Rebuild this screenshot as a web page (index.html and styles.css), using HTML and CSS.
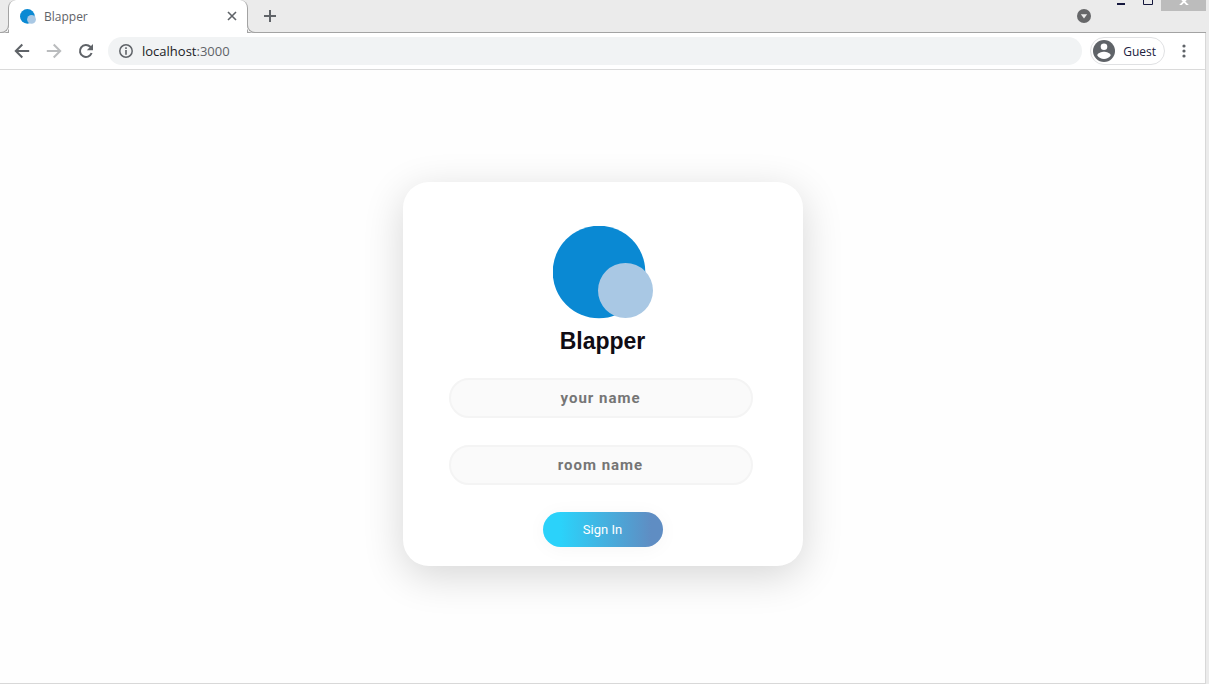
FILE: index.html
```html
<!DOCTYPE html>
<html lang="en">
<head>
<meta charset="utf-8">
<meta name="viewport" content="width=device-width, initial-scale=1">
<title>Blapper</title>
<link rel="stylesheet" href="styles.css">
</head>
<body>
<div class="window">
  <header class="tab-strip">
    <div class="tab">
      <svg class="favicon" viewBox="0 0 100 93" aria-hidden="true"><circle cx="46" cy="46" r="46" fill="#0a89d3"/><circle cx="72" cy="65" r="27.5" fill="#a9c8e4"/></svg>
      <span class="tab-title">Blapper</span>
      <button class="icon-button" type="button" aria-label="Close tab"><svg width="10" height="10" viewBox="0 0 10 10"><path d="M1 1l8 8M9 1l-8 8" stroke="#5f6368" stroke-width="1.6" fill="none"/></svg></button>
    </div>
    <button class="icon-button new-tab" type="button" aria-label="New tab"><svg width="12" height="12" viewBox="0 0 12 12"><path d="M6 0v12M0 6h12" stroke="#5f6368" stroke-width="2" fill="none"/></svg></button>
    <button class="icon-button tab-search" type="button" aria-label="Search tabs"><svg width="14" height="14" viewBox="0 0 14 14"><circle cx="7" cy="7" r="7" fill="#666769"/><path d="M3.8 5.2h6.4L7 9.4z" fill="#ebebeb"/></svg></button>
    <div class="window-controls">
      <button class="control" type="button" aria-label="Minimize"><svg width="8" height="5" viewBox="0 0 8 5"><path d="M0 3h8v2H0z" fill="#14173d"/></svg></button>
      <button class="control" type="button" aria-label="Maximize"><svg width="10" height="5" viewBox="0 0 10 5"><path d="M.5 0v4.5h9V0" stroke="#14173d" fill="none"/></svg></button>
      <button class="control close" type="button" aria-label="Close"><svg width="10" height="5" viewBox="0 0 10 5"><path d="M1 5.5L8 -1.5M9 5.5L2 -1.5" stroke="#fff" stroke-width="1.8" fill="none"/></svg></button>
    </div>
  </header>

  <nav class="toolbar" aria-label="Browser">
    <button class="icon-button" type="button" aria-label="Back"><svg width="16" height="16" viewBox="0 0 16 16"><path d="M15.2 8H2M8.300 1.500L1.800 8l6.500 6.500" stroke="#5f6368" stroke-width="2" fill="none"/></svg></button>
    <button class="icon-button" type="button" aria-label="Forward"><svg width="16" height="16" viewBox="0 0 16 16"><path d="M.8 8H14M7.700 1.500L14.200 8l-6.500 6.500" stroke="#babcbe" stroke-width="2" fill="none"/></svg></button>
    <button class="icon-button" type="button" aria-label="Reload"><svg width="16" height="16" viewBox="0 0 16 16"><path d="M13.600 10A6 6 0 1 1 12.300 3.800L13.400 5" stroke="#5f6368" stroke-width="2" fill="none"/><path d="M15 1v6.200H8.800z" fill="#5f6368"/></svg></button>
    <div class="address">
      <svg width="14" height="14" viewBox="0 0 14 14" aria-hidden="true"><circle cx="7" cy="7" r="6.200" fill="none" stroke="#5f6368" stroke-width="1.500"/><path d="M6.200 3.300h1.600v1.600H6.200zM6.200 6h1.600v4.700H6.200z" fill="#5f6368"/></svg>
      <span class="url">localhost<span class="port">:3000</span></span>
    </div>
    <button class="profile" type="button">
      <svg width="22" height="22" viewBox="0 0 22 22" aria-hidden="true"><circle cx="11" cy="11" r="11" fill="#5f6368"/><circle cx="11" cy="6.700" r="3.300" fill="#fff"/><path d="M4.300 15.500c0-2.700 4.500-3.800 6.700-3.800s6.700 1.100 6.700 3.800c-1.500 2.300-4 3.500-6.700 3.500s-5.200-1.200-6.700-3.500z" fill="#fff"/></svg>
      <span>Guest</span>
    </button>
    <button class="icon-button menu" type="button" aria-label="Menu"><svg width="4" height="14" viewBox="0 0 4 14"><g fill="#5f6368"><circle cx="2" cy="2" r="1.600"/><circle cx="2" cy="7" r="1.600"/><circle cx="2" cy="12" r="1.600"/></g></svg></button>
  </nav>

  <main class="page">
    <form class="card">
      <svg class="logo" viewBox="0 0 100 93" aria-hidden="true"><circle cx="46" cy="46" r="46.300" fill="#0a89d3"/><circle cx="72.500" cy="64.500" r="27.500" fill="#a9c8e4"/></svg>
      <h1 class="brand">Blapper</h1>
      <div class="fields">
        <input class="field" type="text" placeholder="your name" aria-label="your name">
        <input class="field" type="text" placeholder="room name" aria-label="room name">
      </div>
      <button class="sign-in" type="button">Sign In</button>
    </form>
  </main>
</div>
</body>
</html>
```
FILE: styles.css
```css
* {
  box-sizing: border-box;
}

body {
  margin: 0;
  background: #ebebeb;
  font-family: "Open Sans", "Noto Sans", sans-serif;
}

button {
  padding: 0;
  border: 0;
  background: none;
  font: inherit;
}

.window {
  display: flex;
  flex-direction: column;
  min-height: 100vh;
  margin-right: 3px;
}

.tab-strip {
  display: flex;
  height: 33px;
  padding-left: 8px;
  border-bottom: 1px solid #a3a3a3;
}

.tab {
  position: relative;
  display: flex;
  align-items: center;
  gap: 8px;
  width: 240px;
  height: 33px;
  padding: 0 10px 1px 11px;
  border: solid #a3a3a3;
  border-width: 0 1px;
  border-radius: 8px 8px 0 0;
  background: #fff;
}

.tab::before,
.tab::after {
  content: "";
  position: absolute;
  bottom: 0;
  width: 9px;
  height: 9px;
  border-bottom: 1px solid #a3a3a3;
}

.tab::before {
  right: 100%;
  border-right: 1px solid #a3a3a3;
  border-bottom-right-radius: 8px;
  box-shadow: 1px 0 0 #fff;
}

.tab::after {
  left: 100%;
  border-left: 1px solid #a3a3a3;
  border-bottom-left-radius: 8px;
  box-shadow: -1px 0 0 #fff;
}

.favicon {
  width: 16px;
  height: 15px;
}

.tab-title {
  flex: 1;
  color: #5f6368;
  font-size: 12px;
}

.icon-button {
  display: flex;
  align-items: center;
  justify-content: center;
  width: 16px;
  height: 16px;
}

.tab .icon-button {
  width: 10px;
}

.new-tab {
  margin: 8px 0 0 14px;
}

.tab-search {
  margin: 8px 15px 0 auto;
}

.window-controls {
  display: flex;
  align-items: flex-start;
}

.control {
  display: flex;
  justify-content: center;
  width: 27px;
  height: 11px;
}

.control.close {
  width: 45px;
  background: #bcbcbc;
}

.toolbar {
  display: flex;
  align-items: center;
  gap: 16px;
  height: 37px;
  padding: 0 14px;
  border-right: 1px solid #d8d8d8;
  border-bottom: 1px solid #dadada;
  background: #fff;
}

.address {
  display: flex;
  flex: 1;
  align-items: center;
  gap: 9px;
  height: 28px;
  margin: 0 -8px 0 -2px;
  padding: 0 11px;
  border-radius: 14px;
  background: #f1f3f4;
}

.url {
  color: #202124;
  font-size: 13px;
}

.port {
  color: #5f6368;
}

.profile {
  display: flex;
  align-items: center;
  gap: 8px;
  height: 28px;
  padding: 0 8px 0 2px;
  border: 1px solid #e0e1e3;
  border-radius: 14px;
  color: #202140;
  font-size: 12px;
}

.menu {
  width: 8px;
  margin-left: -1px;
  margin-right: 3px;
}

.page {
  display: flex;
  flex: 1;
  align-items: center;
  justify-content: center;
  padding-bottom: 5px;
  border-right: 1px solid #d8d8d8;
  border-bottom: 1px solid #d8d8d8;
  background: #fefefe;
}

.card {
  display: flex;
  flex-direction: column;
  align-items: center;
  width: 400px;
  padding: 44px 46px 19px;
  border-radius: 26px;
  background: #fff;
  box-shadow: 0 10px 40px rgba(0, 0, 0, 0.16);
}

.logo {
  width: 100px;
  height: 93px;
}

.brand {
  margin: 8px 0 23px;
  color: #100c14;
  font: bold 23px/28px "Liberation Sans", Arial, sans-serif;
}

.fields {
  display: grid;
  gap: 27px;
  width: 100%;
  padding-right: 4px;
  margin-bottom: 27px;
}

.field {
  width: 100%;
  height: 40px;
  padding: 0 16px;
  border: 2px solid #f4f4f4;
  border-radius: 20px;
  background: #fafafa;
  font: bold 15px Roboto, sans-serif;
  letter-spacing: 1px;
  text-align: center;
}

.field::placeholder {
  color: #757575;
}

.sign-in {
  width: 120px;
  height: 35px;
  border-radius: 18px;
  background: linear-gradient(to right, #2bd2fa 15%, #5f8dc3 90%);
  box-shadow: 0 2px 20px rgba(0, 0, 0, 0.04);
  color: #fff;
  font: 400 13px Roboto, sans-serif;
}
```
